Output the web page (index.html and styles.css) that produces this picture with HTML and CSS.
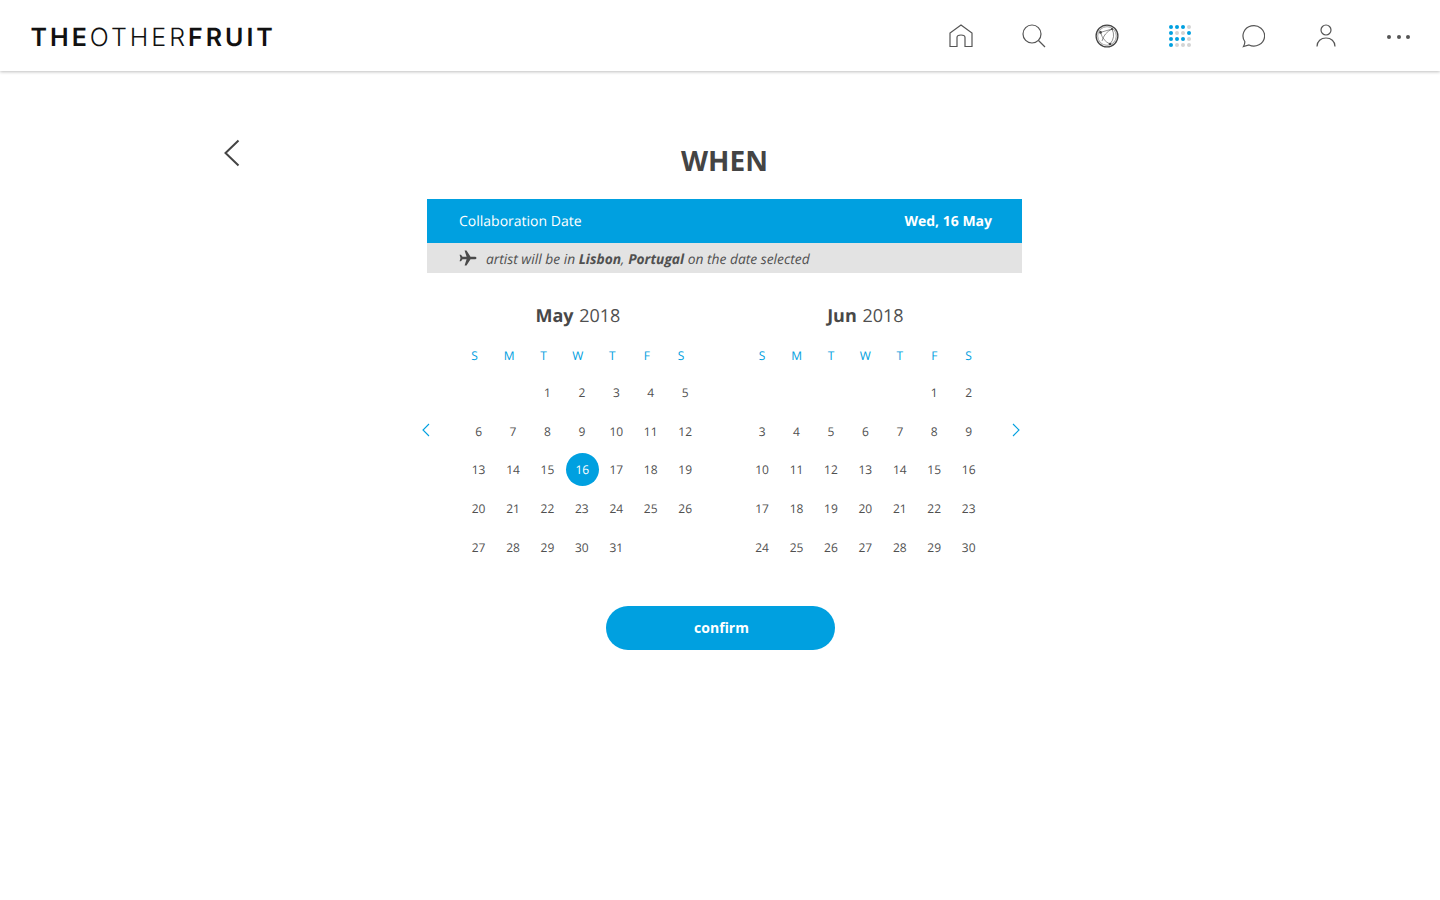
FILE: index.html
```html
<!DOCTYPE html>
<html lang="en">
<head>
  <meta charset="UTF-8" />
  <meta name="viewport" content="width=device-width, initial-scale=1.0"/>
  <title>When</title>
  <link rel="stylesheet" href="styles.css">
</head>
<body>
  <header class="topbar">
    <div class="logo"><b>THE</b>OTHER<b>FRUIT</b></div>
    <nav class="nav">
      <a class="nav-item">
        <svg width="26" height="24" viewBox="0 0 26 24" fill="none" stroke="#555" stroke-width="1.2"><path d="M2 22.500V9L13 1l11 8v13.500h-7V13.500Q17 11 13 11T9 13.500v9z"/></svg>
      </a>
      <a class="nav-item">
        <svg width="26" height="26" viewBox="0 0 26 26" fill="none" stroke="#555" stroke-width="1.2"><circle cx="11" cy="11" r="9"/><path d="M17.500 17.500l6.500 6.500"/></svg>
      </a>
      <a class="nav-item">
        <svg width="24" height="24" viewBox="0 0 24 24" fill="none" stroke="#444">
          <circle cx="12" cy="12" r="10.900" stroke-width="1.300"/>
          <circle cx="12" cy="12" r="9.300" stroke-width=".5"/>
          <path stroke-width=".6" d="M5.500 8.400L17 5M5.500 8.400Q8 17 15 20M17 5Q21 13 15 20M17 5Q9 9 7 17"/>
          <circle cx="5.500" cy="8.400" r="1.300" fill="#444" stroke="none"/>
          <circle cx="17" cy="5" r="1.100" fill="#444" stroke="none"/>
          <circle cx="15" cy="20" r="1.300" fill="#444" stroke="none"/>
        </svg>
      </a>
      <a class="nav-item">
        <svg width="24" height="24" viewBox="0 0 24 24">
          <g fill="#00a0e0">
            <circle cx="3" cy="3" r="2"/><circle cx="9" cy="3" r="2"/><circle cx="15" cy="3" r="2"/>
            <circle cx="3" cy="9" r="2"/><circle cx="21" cy="9" r="2"/>
            <circle cx="3" cy="15" r="2"/><circle cx="9" cy="15" r="2"/><circle cx="15" cy="15" r="2"/>
            <circle cx="3" cy="21" r="2"/>
          </g>
          <g fill="#d4d4d4">
            <circle cx="21" cy="3" r="2"/><circle cx="9" cy="9" r="2"/><circle cx="15" cy="9" r="2"/>
            <circle cx="21" cy="15" r="2"/><circle cx="9" cy="21" r="2"/><circle cx="15" cy="21" r="2"/><circle cx="21" cy="21" r="2"/>
          </g>
        </svg>
      </a>
      <a class="nav-item">
        <svg width="24" height="24" viewBox="0 0 24 24" fill="none" stroke="#555" stroke-width="1.2"><path d="M3.800 17.500A10.800 10.200 0 1 1 8 21L2.500 22.500Q4 20 3.800 17.500z"/></svg>
      </a>
      <a class="nav-item">
        <svg width="22" height="24" viewBox="0 0 22 24" fill="none" stroke="#555" stroke-width="1.2"><circle cx="11" cy="6" r="5"/><path d="M2 22.500c0-5.500 4-8.500 9-8.500s9 3 9 8.500"/></svg>
      </a>
      <a class="nav-item">
        <svg class="more" width="26" height="6" viewBox="0 0 26 6" fill="#555"><circle cx="3" cy="3" r="2"/><circle cx="13" cy="3" r="2"/><circle cx="22" cy="3" r="2"/></svg>
      </a>
    </nav>
  </header>

  <main class="page">
    <a class="back">
      <svg width="18" height="28" viewBox="0 0 18 28" fill="none" stroke="#444" stroke-width="2"><path d="M15.500 1.500L2.500 14l13 12.500"/></svg>
    </a>

    <section class="when">
      <h1>WHEN</h1>

      <div class="date-bar">
        <span>Collaboration Date</span>
        <strong>Wed, 16 May</strong>
      </div>
      <div class="note">
        <svg width="18" height="16" viewBox="0 0 18 16" fill="#4a4a4a"><path d="M17.500 8c0-.8-1-1.300-2-1.300h-4L7.500 .5H5.600l2 6.200H3.500L2 4.800H.6L1.500 8 .6 11.200H2l1.500-1.900h4.100l-2 6.200h1.900l4-6.200h4c1 0 2-.5 2-1.300z"/></svg>
        <span class="note-text">artist will be in <b>Lisbon</b>, <b>Portugal</b> on the date selected</span>
      </div>

      <div class="calendars">
        <a class="arrow">
          <svg width="10" height="14" viewBox="0 0 10 14" fill="none" stroke="#00a0e0" stroke-width="1.100"><path d="M8 1L2 7l6 6"/></svg>
        </a>
        <div class="month may" id="may"></div>
        <div class="month jun" id="jun"></div>
        <a class="arrow">
          <svg width="10" height="14" viewBox="0 0 10 14" fill="none" stroke="#00a0e0" stroke-width="1.100"><path d="M2 1l6 6-6 6"/></svg>
        </a>
      </div>

      <button class="confirm">confirm</button>
    </section>
  </main>

  <script>
    const dayNames = ["S", "M", "T", "W", "T", "F", "S"];

    // blanks = empty cells before the 1st
    function buildMonth(id, name, blanks, total, selected) {
      const el = document.getElementById(id);

      const title = document.createElement("div");
      title.className = "month-title";
      title.innerHTML = "<b>" + name + "</b> 2018";
      el.appendChild(title);

      const head = document.createElement("div");
      head.className = "week-head";
      dayNames.forEach(d => {
        const c = document.createElement("span");
        c.textContent = d;
        head.appendChild(c);
      });
      el.appendChild(head);

      const grid = document.createElement("div");
      grid.className = "days";
      for (let i = 0; i < blanks; i++) {
        grid.appendChild(document.createElement("span"));
      }
      for (let d = 1; d <= total; d++) {
        const c = document.createElement("span");
        c.textContent = d;
        if (d === selected) c.className = "selected";
        grid.appendChild(c);
      }
      el.appendChild(grid);
    }

    buildMonth("may", "May", 2, 31, 16);
    buildMonth("jun", "Jun", 5, 30, 0);
  </script>
</body>
</html>
```

FILE: styles.css
```css
* {
  box-sizing: border-box;
}
body {
  margin: 0;
  font-family: "Open Sans", sans-serif;
  background-color: #fff;
  color: #505050;
  text-rendering: geometricPrecision;
}
.topbar {
  display: flex;
  align-items: center;
  justify-content: space-between;
  height: 71px;
  padding: 0 5px 0 30.500px;
  background-color: #fff;
  box-shadow: 0 1px 3px rgba(0, 0, 0, 0.25);
}
.logo {
  padding-top: 5px;
  font-family: Inter, sans-serif;
  font-size: 25px;
  font-weight: 300;
  letter-spacing: 3px;
  color: #111;
}
.logo b {
  font-weight: 600;
}
.nav {
  display: flex;
  align-items: center;
  padding-top: 1px;
}
.nav-item {
  display: flex;
  align-items: center;
  justify-content: center;
  width: 73px;
  height: 71px;
}
.more {
  margin-top: 1px;
}
.page {
  display: grid;
  grid-template-columns: 427px 595px;
}
.back {
  padding: 68px 0 0 223px;
}
.when {
  padding-top: 73px;
}
h1 {
  margin: 0 0 21px;
  font-size: 28px;
  line-height: 34px;
  font-weight: 700;
  text-align: center;
  color: #444;
}
.date-bar {
  display: flex;
  align-items: center;
  justify-content: space-between;
  height: 44px;
  padding: 0 30px 0 32px;
  background-color: #00a0e0;
  color: #fff;
  font-size: 14px;
}
.note {
  display: flex;
  align-items: center;
  gap: 9px;
  height: 30px;
  padding-left: 32px;
  background-color: #e3e3e3;
  font-size: 13.8px;
  font-style: italic;
}
.note-text {
  padding-top: 2px;
}
.calendars {
  display: flex;
  margin: 27px -2px 0 -6px;
}
.arrow {
  width: 10px;
  padding-top: 120px;
}
.month {
  width: 241px;
  margin-left: 30.4px;
}
.jun {
  margin-left: 42.5px;
  margin-right: 25.1px;
}
.month-title {
  font-size: 18px;
  line-height: 32px;
  text-align: center;
  margin-bottom: 14px;
  word-spacing: 1px;
}
.month-title b {
  color: #484848;
}
.week-head,
.days {
  display: grid;
  grid-template-columns: repeat(7, 1fr);
  text-align: center;
}
.week-head {
  font-size: 12px;
  line-height: 20px;
  color: #00a0e0;
  margin-bottom: 7px;
}
.may .week-head,
.may .month-title {
  transform: translateX(-4px);
}
.days {
  grid-auto-rows: 38.7px;
  font-size: 12px;
  align-items: center;
  justify-items: center;
}
.days span {
  display: flex;
  align-items: center;
  justify-content: center;
  width: 33px;
  height: 33px;
}
.days .selected {
  margin-left: 1px;
  border-radius: 50%;
  background-color: #00a0e0;
  color: #fff;
}
.confirm {
  display: block;
  width: 229px;
  height: 44px;
  margin: 40px 0 0 179px;
  padding: 0 0 2px 2px;
  border: 0;
  border-radius: 22px;
  background-color: #00a0e0;
  color: #fff;
  font-family: "Open Sans", sans-serif;
  font-size: 14px;
  font-weight: 700;
}
```
